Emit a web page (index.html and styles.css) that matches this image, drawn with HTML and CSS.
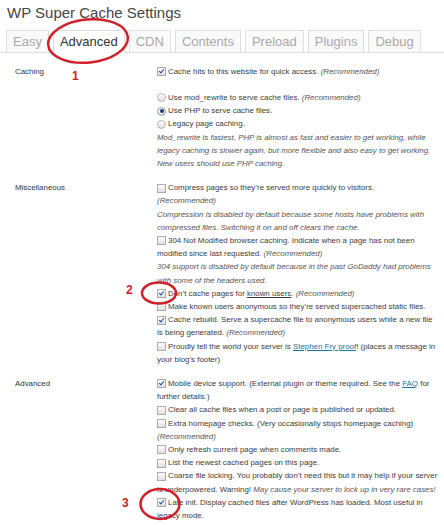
FILE: index.html
```html
<!DOCTYPE html>
<html lang="en">
<head>
    <meta charset="UTF-8">
    <title>WP Super Cache Settings</title>
    <link rel="stylesheet" href="styles.css">
</head>
<body>
    <div class="page">
        <h2 class="title">WP Super Cache Settings</h2>

        <div class="tabs">
            <a class="tab">Easy</a>
            <a class="tab active">Advanced</a>
            <a class="tab">CDN</a>
            <a class="tab">Contents</a>
            <a class="tab">Preload</a>
            <a class="tab">Plugins</a>
            <a class="tab">Debug</a>
        </div>

        <div class="settings">
            <div class="row">
                <div class="label">Caching</div>
                <div class="field">
                    <label class="opt"><span class="cb on"></span>Cache hits to this website for quick access. <em>(Recommended)</em></label>
                    <div class="radios">
                        <label class="opt"><span class="rd"></span>Use mod_rewrite to serve cache files. <em>(Recommended)</em></label>
                        <label class="opt"><span class="rd on"></span>Use PHP to serve cache files.</label>
                        <label class="opt"><span class="rd"></span>Legacy page caching.</label>
                        <p class="desc">Mod_rewrite is fastest, PHP is almost as fast and easier to get working, while<br>legacy caching is slower again, but more flexible and also easy to get working.<br>New users should use PHP caching.</p>
                    </div>
                </div>
            </div>

            <div class="row">
                <div class="label">Miscellaneous</div>
                <div class="field">
                    <label class="opt"><span class="cb"></span>Compress pages so they’re served more quickly to visitors.<br><em>(Recommended)</em></label>
                    <p class="desc">Compression is disabled by default because some hosts have problems with<br>compressed files. Switching it on and off clears the cache.</p>
                    <label class="opt"><span class="cb"></span>304 Not Modified browser caching. Indicate when a page has not been<br>modified since last requested. <em>(Recommended)</em></label>
                    <p class="desc">304 support is disabled by default because in the past GoDaddy had problems<br>with some of the headers used.</p>
                    <label class="opt"><span class="cb on"></span>Don’t cache pages for <span class="abbr">known users</span>. <em>(Recommended)</em></label>
                    <label class="opt"><span class="cb"></span>Make known users anonymous so they’re served supercached static files.</label>
                    <label class="opt"><span class="cb on"></span>Cache rebuild. Serve a supercache file to anonymous users while a new file<br>is being generated. <em>(Recommended)</em></label>
                    <label class="opt"><span class="cb"></span>Proudly tell the world your server is <a class="link">Stephen Fry proof</a>! (places a message in<br>your blog’s footer)</label>
                </div>
            </div>

            <div class="row">
                <div class="label">Advanced</div>
                <div class="field">
                    <label class="opt"><span class="cb on"></span>Mobile device support. (External plugin or theme required. See the <a class="link">FAQ</a> for<br>further details.)</label>
                    <label class="opt"><span class="cb"></span>Clear all cache files when a post or page is published or updated.</label>
                    <label class="opt"><span class="cb"></span>Extra homepage checks. (Very occasionally stops homepage caching)<br><em>(Recommended)</em></label>
                    <label class="opt"><span class="cb"></span>Only refresh current page when comments made.</label>
                    <label class="opt"><span class="cb"></span>List the newest cached pages on this page.</label>
                    <label class="opt"><span class="cb"></span>Coarse file locking. You probably don’t need this but it may help if your server<br>is underpowered. Warning! <em>May cause your server to lock up in very rare cases!</em></label>
                    <label class="opt"><span class="cb on"></span>Late init. Display cached files after WordPress has loaded. Most useful in<br>legacy mode.</label>
                </div>
            </div>
        </div>

        <!-- red hand-drawn marks laid over the screenshot -->
        <svg class="marks" width="444" height="525" viewBox="0 0 444 525">
            <ellipse cx="88" cy="41" rx="40" ry="21.5" transform="rotate(-6 88 41)"/>
            <ellipse cx="159" cy="293" rx="17" ry="10.5"/>
            <ellipse cx="160" cy="504" rx="19.5" ry="15"/>
        </svg>
        <span class="num n1">1</span>
        <span class="num n2">2</span>
        <span class="num n3">3</span>
    </div>
</body>
</html>
```

FILE: styles.css
```css
body {
    margin: 0;
    background-color: #fff;
    font-family: "Liberation Sans", Arial, sans-serif;
}
.page {
    position: relative;
    width: 444px;
    height: 525px;
    overflow: hidden;
    padding-top: 4px;
    box-sizing: border-box;
}
.title {
    margin: 0;
    padding-left: 7px;
    font-size: 15px;
    line-height: 18px;
    font-weight: normal;
    color: #464646;
}

/* tabs */
.tabs {
    display: flex;
    gap: 4px;
    margin-top: 8px;
    padding-left: 6px;
    border-bottom: 1px solid #dcdcdc;
}
.tab {
    padding: 0 6px;
    margin-bottom: -1px;
    border: 1px solid #dedede;
    background-color: #fafafa;
    font-size: 13px;
    line-height: 21px;
    color: #a9a9a9;
}
.tab.active {
    background-color: #fff;
    border-bottom-color: #fff;
    color: #333;
}

/* settings table */
.settings {
    padding-top: 6px;
    font-size: 7.9px;
    line-height: 13.2px;
    color: #3c3c3c;
}
.row {
    display: grid;
    grid-template-columns: 142px 287px;
    padding: 5.5px 0 5.5px 15px;
}
.label {
    color: #333;
}
.opt {
    display: block;
}
.radios {
    margin-top: 13.2px;
}
.desc {
    margin: 0;
    font-style: italic;
    color: #555;
}
em {
    color: #555;
}
.abbr {
    text-decoration: underline;
}
.link {
    color: #21759b;
    text-decoration: underline;
}

/* checkboxes and radios */
.cb, .rd {
    position: relative;
    display: inline-block;
    width: 9px;
    height: 9px;
    margin-right: 2px;
    box-sizing: border-box;
    border: 1px solid #ababab;
    background: linear-gradient(#fdfdfd, #e0e0e0);
    vertical-align: middle;
}
.cb.on::after {
    content: "";
    position: absolute;
    left: 2px;
    top: 0;
    width: 2px;
    height: 4px;
    border: solid #2b4f9a;
    border-width: 0 1.5px 1.5px 0;
    transform: rotate(40deg);
}
.rd {
    border-radius: 50%;
    border-color: #b4b4b4;
}
.rd.on {
    border-color: #8b9bb4;
}
.rd.on::after {
    content: "";
    position: absolute;
    left: 1.5px;
    top: 1.5px;
    width: 4px;
    height: 4px;
    border-radius: 50%;
    background-color: #1e3a68;
}

/* annotations */
.marks {
    position: absolute;
    left: 0;
    top: 0;
    pointer-events: none;
}
.marks ellipse {
    fill: none;
    stroke: #d0202a;
    stroke-width: 2.5;
}
.num {
    position: absolute;
    font-size: 12px;
    line-height: 12px;
    font-weight: bold;
    color: #d0202a;
}
.n1 { left: 72px; top: 70px; }
.n2 { left: 126px; top: 284px; }
.n3 { left: 122px; top: 497px; }
```
